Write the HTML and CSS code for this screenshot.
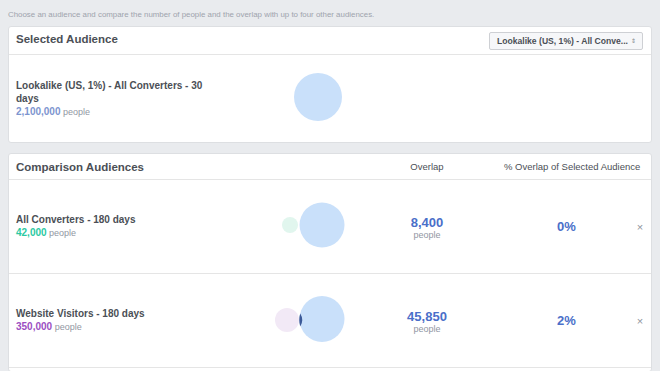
FILE: index.html
```html
<!DOCTYPE html>
<html lang="en">
<head>
    <meta charset="UTF-8">
    <title>Audience Overlap</title>
    <link rel="stylesheet" href="styles.css">
</head>
<body>
    <p class="intro">Choose an audience and compare the number of people and the overlap with up to four other audiences.</p>

    <div class="card">
        <div class="card-head selected-head">
            <h2>Selected Audience</h2>
            <div class="select">Lookalike (US, 1%) - All Conve... <span class="caret">&#8661;</span></div>
        </div>
        <div class="selected-body">
            <div class="name">
                <strong>Lookalike (US, 1%) - All Converters - 30 days</strong>
                <div class="size"><b class="blue">2,100,000</b> people</div>
            </div>
            <div class="venn">
                <svg width="136" height="60" viewBox="0 0 136 60">
                    <circle cx="70" cy="30" r="24" fill="#c9e0fa"/>
                </svg>
            </div>
        </div>
    </div>

    <div class="card compare">
        <div class="row head-row">
            <h2>Comparison Audiences</h2>
            <span></span>
            <span class="col-label">Overlap</span>
            <span class="col-label pct-label">% Overlap of Selected Audience</span>
        </div>

        <div class="row">
            <div class="name">
                <strong>All Converters - 180 days</strong>
                <div class="size"><b class="green">42,000</b> people</div>
            </div>
            <div class="venn">
                <svg width="136" height="60" viewBox="0 0 136 60">
                    <circle cx="42" cy="30" r="8" fill="#e1f6ee"/>
                    <circle cx="74" cy="30" r="22.5" fill="#c9e0fa"/>
                </svg>
            </div>
            <div class="overlap"><b>8,400</b><span>people</span></div>
            <div class="pct">0%</div>
            <div class="remove">&times;</div>
        </div>

        <div class="row">
            <div class="name">
                <strong>Website Visitors - 180 days</strong>
                <div class="size"><b class="purple">350,000</b> people</div>
            </div>
            <div class="venn">
                <svg width="136" height="60" viewBox="0 0 136 60">
                    <circle cx="39" cy="31" r="12" fill="#f2e9f6"/>
                    <ellipse cx="74" cy="30" rx="22.5" ry="23" fill="#c9e0fa"/>
                    <path d="M52.2 24.5 A12 12 0 0 1 52.2 37.5 A23 23 0 0 1 52.2 24.5 Z" fill="#3b5998"/>
                </svg>
            </div>
            <div class="overlap"><b>45,850</b><span>people</span></div>
            <div class="pct">2%</div>
            <div class="remove">&times;</div>
        </div>
    </div>
</body>
</html>
```

FILE: styles.css
```css
* { margin: 0; padding: 0; box-sizing: border-box; }
body {
    font-family: "Liberation Sans", Arial, sans-serif;
    background: #e9ebee;
    color: #4b4f56;
    padding: 0 8px;
}
.intro {
    font-size: 7.9px;
    color: #9ea3ad;
    padding: 10px 0 7px 0;
}
.card {
    background: #fff;
    border: 1px solid #dddfe2;
    border-radius: 3px;
    margin-bottom: 10px;
}
.compare {
    margin-bottom: 0;
    padding-bottom: 3px;
}
h2 {
    font-size: 11.5px;
    font-weight: bold;
    color: #4b4f56;
}
.card-head {
    display: flex;
    justify-content: space-between;
    align-items: center;
    height: 28px;
    padding: 0 8px 0 7px;
    border-bottom: 1px solid #e5e5e5;
}
.selected-head h2 {
    padding-bottom: 3px;
}
.select {
    font-size: 8.6px;
    font-weight: bold;
    color: #4b4f56;
    background: #f6f7f9;
    border: 1px solid #ced0d4;
    border-radius: 2px;
    padding: 3px 6px 3px 7px;
    width: 154px;
    white-space: nowrap;
    display: flex;
    justify-content: space-between;
    align-items: center;
}
.caret {
    font-size: 6px;
    color: #7f838b;
    font-weight: normal;
}
.selected-body {
    display: grid;
    grid-template-columns: 232px 136px;
    align-items: center;
    height: 87px;
    padding: 0 7px;
}
.name strong {
    display: block;
    font-size: 10px;
    line-height: 13px;
    max-width: 195px;
}
.size {
    font-size: 9px;
    line-height: 13px;
    color: #9197a3;
}
.size b { font-size: 10px; }
.blue { color: #7d95cf; }
.green { color: #2bc9a2; }
.purple { color: #9b4fc2; }
.row {
    display: grid;
    grid-template-columns: 232px 136px 86px 1fr 22px;
    align-items: center;
    height: 94px;
    padding-left: 7px;
    border-bottom: 1px solid #e5e5e5;
}
.row.head-row {
    height: 26px;
}
.col-label {
    font-size: 9.5px;
    color: #4b4f56;
    text-align: center;
    white-space: nowrap;
}
.pct-label {
    grid-column: 4 / 6;
    padding-left: 34px;
    padding-right: 12px;
}
.overlap {
    text-align: center;
    display: flex;
    flex-direction: column;
    padding-top: 2px;
}
.overlap b {
    font-size: 13px;
    color: #4a6fc9;
}
.overlap span {
    font-size: 9px;
    color: #9197a3;
}
.pct {
    text-align: center;
    padding-left: 34px;
    font-size: 13px;
    font-weight: bold;
    color: #4a6fc9;
}
.remove {
    font-size: 11px;
    color: #90949c;
    text-align: center;
}
```
